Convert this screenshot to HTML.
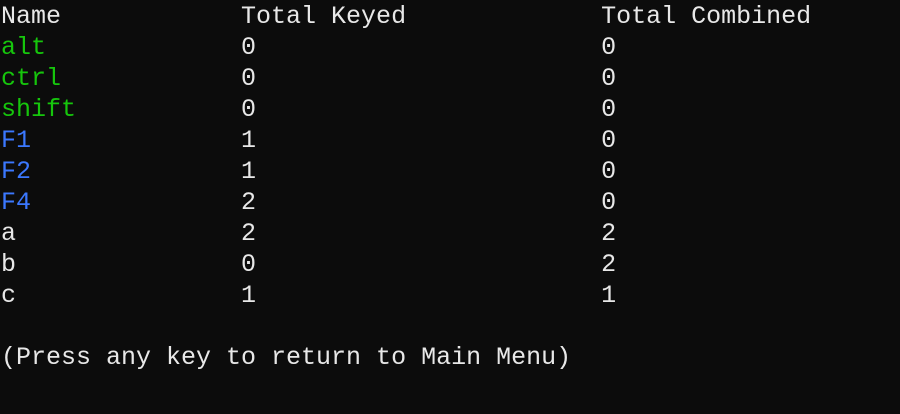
<!DOCTYPE html>
<html><head><style>
html,body{margin:0;padding:0;background:#0c0c0c;width:900px;height:414px;overflow:hidden}
pre{margin:0;padding:1px 0 0 1px;font-family:"Liberation Mono",monospace;font-size:25px;line-height:31px;color:#e8e8e8;letter-spacing:0}
.g{color:#16c60c}.b{color:#3b78ff}
</style></head><body><pre>Name            Total Keyed             Total Combined
<span class="g">alt</span>             0                       0
<span class="g">ctrl</span>            0                       0
<span class="g">shift</span>           0                       0
<span class="b">F1</span>              1                       0
<span class="b">F2</span>              1                       0
<span class="b">F4</span>              2                       0
a               2                       2
b               0                       2
c               1                       1

(Press any key to return to Main Menu)</pre></body></html>
